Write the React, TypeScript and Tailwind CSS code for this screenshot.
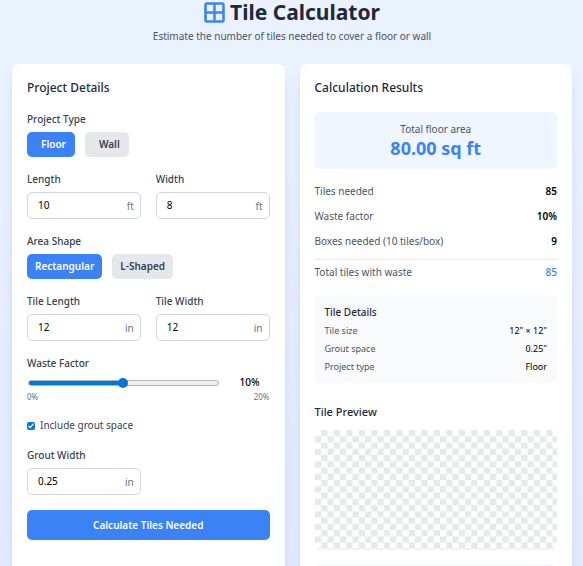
import { useState } from "react"
import type { ReactNode } from "react"
import clsx from "clsx"

const TILES_PER_BOX = 10

type Project = "Floor" | "Wall"
type Shape = "Rectangular" | "L-Shaped"

function GridIcon() {
  return (
    <svg viewBox="0 0 21 21" className="size-[21px] shrink-0" fill="none" aria-hidden="true">
      <rect x="1.5" y="1.5" width="18" height="18" rx="1.5" stroke="#3b82f6" strokeWidth="2.6" />
      <path d="M10.5 2v17M2 10.5h17" stroke="#3b82f6" strokeWidth="2.4" />
    </svg>
  )
}

function Choice({
  active,
  onClick,
  className,
  children,
}: {
  active: boolean
  onClick: () => void
  className?: string
  children: ReactNode
}) {
  return (
    <button
      type="button"
      aria-pressed={active}
      onClick={onClick}
      className={clsx(
        "h-[25px] rounded-[5px] text-[10px] font-semibold leading-[15px]",
        active ? "bg-[#3b82f6] text-white" : "bg-[#e5e7eb] text-[#374151]",
        className
      )}
    >
      {children}
    </button>
  )
}

function NumberField({
  id,
  label,
  unit,
  value,
  onChange,
}: {
  id: string
  label: string
  unit: string
  value: string
  onChange: (value: string) => void
}) {
  return (
    <div>
      <label htmlFor={id} className="mb-[5px] block font-medium text-[#374151]">
        {label}
      </label>
      <div className="flex h-[27px] items-center rounded-[5px] border border-[#d1d5db] pl-[10px] pr-[6px]">
        <input
          id={id}
          type="text"
          inputMode="decimal"
          value={value}
          onChange={(e) => onChange(e.target.value)}
          className="w-full min-w-0 flex-1 bg-transparent text-black outline-none"
        />
        <span className="pt-[2px] text-[#6b7280]">{unit}</span>
      </div>
    </div>
  )
}

function ResultRow({ label, value }: { label: string; value: ReactNode }) {
  return (
    <div className="flex justify-between">
      <dt className="text-[#4b5563]">{label}</dt>
      <dd className="font-semibold text-black">{value}</dd>
    </div>
  )
}

function DetailRow({ label, value }: { label: string; value: string }) {
  return (
    <div className="flex justify-between text-[9px] leading-[13px]">
      <dt className="text-[#4b5563]">{label}</dt>
      <dd className="text-black">{value}</dd>
    </div>
  )
}

// Checkerboard, each cell built from two triangles with a faint seam
function TilePreview() {
  return (
    <svg className="block h-[120px] w-full rounded-[5px]" role="img" aria-label="Tile preview">
      <defs>
        <pattern
          id="tiles"
          width="20"
          height="20"
          patternUnits="userSpaceOnUse"
          patternTransform="scale(0.625)"
        >
          <rect width="20" height="20" fill="#ffffff" />
          <rect x="10" width="10" height="10" fill="#e5e7eb" />
          <rect y="10" width="10" height="10" fill="#e5e7eb" />
          <path d="M10 10L20 0M0 10L10 20" stroke="#f3f4f6" strokeWidth="0.8" />
        </pattern>
      </defs>
      <rect width="100%" height="100%" fill="url(#tiles)" />
    </svg>
  )
}

export default function App() {
  const [project, setProject] = useState<Project>("Floor")
  const [shape, setShape] = useState<Shape>("Rectangular")
  const [length, setLength] = useState("10")
  const [width, setWidth] = useState("8")
  const [tileLength, setTileLength] = useState("12")
  const [tileWidth, setTileWidth] = useState("12")
  const [waste, setWaste] = useState(10)
  const [grout, setGrout] = useState(true)
  const [groutWidth, setGroutWidth] = useState("0.25")

  const area = Number(length) * Number(width)
  const gap = grout ? Number(groutWidth) : 0
  const tileArea = ((Number(tileLength) + gap) * (Number(tileWidth) + gap)) / 144
  const tiles = tileArea > 0 ? Math.ceil((area * (1 + waste / 100)) / tileArea) : 0
  const boxes = Math.ceil(tiles / TILES_PER_BOX)
  const fill = (waste / 20) * 100

  return (
    <div className="min-h-screen bg-linear-to-b from-[#ebf2ff] to-[#e2e8ff] pb-5 pl-3 pr-[11px] font-['Noto_Sans','Segoe_UI',sans-serif] text-[10px] leading-[15px]">
      <header className="mb-5 text-center">
        <h1 className="flex h-6 items-center justify-center gap-[5px] text-[21px] font-bold leading-6 text-[#1f2937]">
          <GridIcon />
          Tile Calculator
        </h1>
        <p className="mt-[5px] text-[#4b5563]">
          Estimate the number of tiles needed to cover a floor or wall
        </p>
      </header>

      <main className="grid grid-cols-2 gap-[15px]">
        <section className="rounded-lg bg-white p-[15px] shadow-lg">
          <h2 className="mb-[15px] text-[12px] font-medium leading-[18px] text-[#1f2937]">
            Project Details
          </h2>

          <form className="flex flex-col gap-[15px]" onSubmit={(e) => e.preventDefault()}>
            <fieldset>
              <legend className="mb-[5px] font-medium text-[#374151]">Project Type</legend>
              <div className="flex gap-[10px]">
                <Choice
                  active={project === "Floor"}
                  onClick={() => setProject("Floor")}
                  className="pl-[14px] pr-[9px]"
                >
                  Floor
                </Choice>
                <Choice
                  active={project === "Wall"}
                  onClick={() => setProject("Wall")}
                  className="pl-[14px] pr-[9px]"
                >
                  Wall
                </Choice>
              </div>
            </fieldset>

            <div className="grid grid-cols-2 gap-[15px]">
              <NumberField id="length" label="Length" unit="ft" value={length} onChange={setLength} />
              <NumberField id="width" label="Width" unit="ft" value={width} onChange={setWidth} />
            </div>

            <fieldset>
              <legend className="mb-[5px] font-medium text-[#374151]">Area Shape</legend>
              <div className="flex gap-[10px]">
                <Choice
                  active={shape === "Rectangular"}
                  onClick={() => setShape("Rectangular")}
                  className="px-2"
                >
                  Rectangular
                </Choice>
                <Choice
                  active={shape === "L-Shaped"}
                  onClick={() => setShape("L-Shaped")}
                  className="px-2"
                >
                  L-Shaped
                </Choice>
              </div>
            </fieldset>

            <div className="grid grid-cols-2 gap-[15px]">
              <NumberField
                id="tile-length"
                label="Tile Length"
                unit="in"
                value={tileLength}
                onChange={setTileLength}
              />
              <NumberField
                id="tile-width"
                label="Tile Width"
                unit="in"
                value={tileWidth}
                onChange={setTileWidth}
              />
            </div>

            <div>
              <label htmlFor="waste" className="mb-1 block font-medium text-[#374151]">
                Waste Factor
              </label>
              <div className="flex items-center gap-[10px]">
                <div className="flex flex-1 px-px">
                  <input
                    id="waste"
                    type="range"
                    min={0}
                    max={20}
                    value={waste}
                    onChange={(e) => setWaste(Number(e.target.value))}
                    style={{
                      backgroundImage: `linear-gradient(to right, #0078d7 ${fill}%, #efefef ${fill}%)`,
                    }}
                    className="h-[6px] w-full min-w-0 appearance-none rounded-full border border-[#b2b2b2] bg-origin-border [&::-webkit-slider-thumb]:size-[10px] [&::-webkit-slider-thumb]:appearance-none [&::-webkit-slider-thumb]:rounded-full [&::-webkit-slider-thumb]:bg-[#0078d7]"
                  />
                </div>
                <output htmlFor="waste" className="w-10 text-center font-medium text-black">
                  {waste}%
                </output>
              </div>
              <div className="mt-px flex justify-between text-[8px] leading-[12px] text-[#6b7280]">
                <span>0%</span>
                <span>20%</span>
              </div>
            </div>

            <label className="flex items-center gap-[5px] text-[#374151]">
              <input
                type="checkbox"
                checked={grout}
                onChange={(e) => setGrout(e.target.checked)}
                className="size-2 accent-[#0078d7]"
              />
              Include grout space
            </label>

            {grout && (
              <div className="grid grid-cols-2 gap-[15px]">
                <NumberField
                  id="grout-width"
                  label="Grout Width"
                  unit="in"
                  value={groutWidth}
                  onChange={setGroutWidth}
                />
              </div>
            )}

            <button
              type="submit"
              className="h-[30px] w-full rounded-[5px] bg-[#3b82f6] font-semibold text-white"
            >
              Calculate Tiles Needed
            </button>
          </form>
        </section>

        <section className="rounded-lg bg-white p-[15px] shadow-lg">
          <h2 className="mb-[15px] text-[12px] font-medium leading-[18px] text-[#1f2937]">
            Calculation Results
          </h2>

          <div className="mb-[15px] rounded-[5px] bg-[#eff6ff] p-[10px] text-center">
            <p className="text-[#4b5563]">Total {project.toLowerCase()} area</p>
            <p className="text-[18px] font-bold leading-[22px] text-[#3b82f6]">
              {area.toFixed(2)} sq ft
            </p>
          </div>

          <dl className="flex flex-col gap-[10px]">
            <ResultRow label="Tiles needed" value={tiles} />
            <ResultRow label="Waste factor" value={`${waste}%`} />
            <ResultRow label={`Boxes needed (${TILES_PER_BOX} tiles/box)`} value={boxes} />
            <div className="flex justify-between border-t border-[#e5e7eb] pt-[5px]">
              <dt className="text-[#4b5563]">Total tiles with waste</dt>
              <dd className="font-medium text-[#3b82f6]">{tiles}</dd>
            </div>
          </dl>

          <div className="mt-[15px] rounded-[5px] bg-[#f9fafb] p-[10px]">
            <h3 className="mb-1 font-medium text-[#1f2937]">Tile Details</h3>
            <dl className="flex flex-col gap-[5px]">
              <DetailRow label="Tile size" value={`${tileLength}" × ${tileWidth}"`} />
              <DetailRow label="Grout space" value={grout ? `${groutWidth}"` : "None"} />
              <DetailRow label="Project type" value={project} />
            </dl>
          </div>

          <h3 className="mb-[9px] mt-5 text-[11px] font-medium leading-[18px] text-[#1f2937]">
            Tile Preview
          </h3>
          <TilePreview />

          <div className="mt-[15px] h-20 rounded-[5px] bg-[#eff6ff]" />
        </section>
      </main>
    </div>
  )
}
